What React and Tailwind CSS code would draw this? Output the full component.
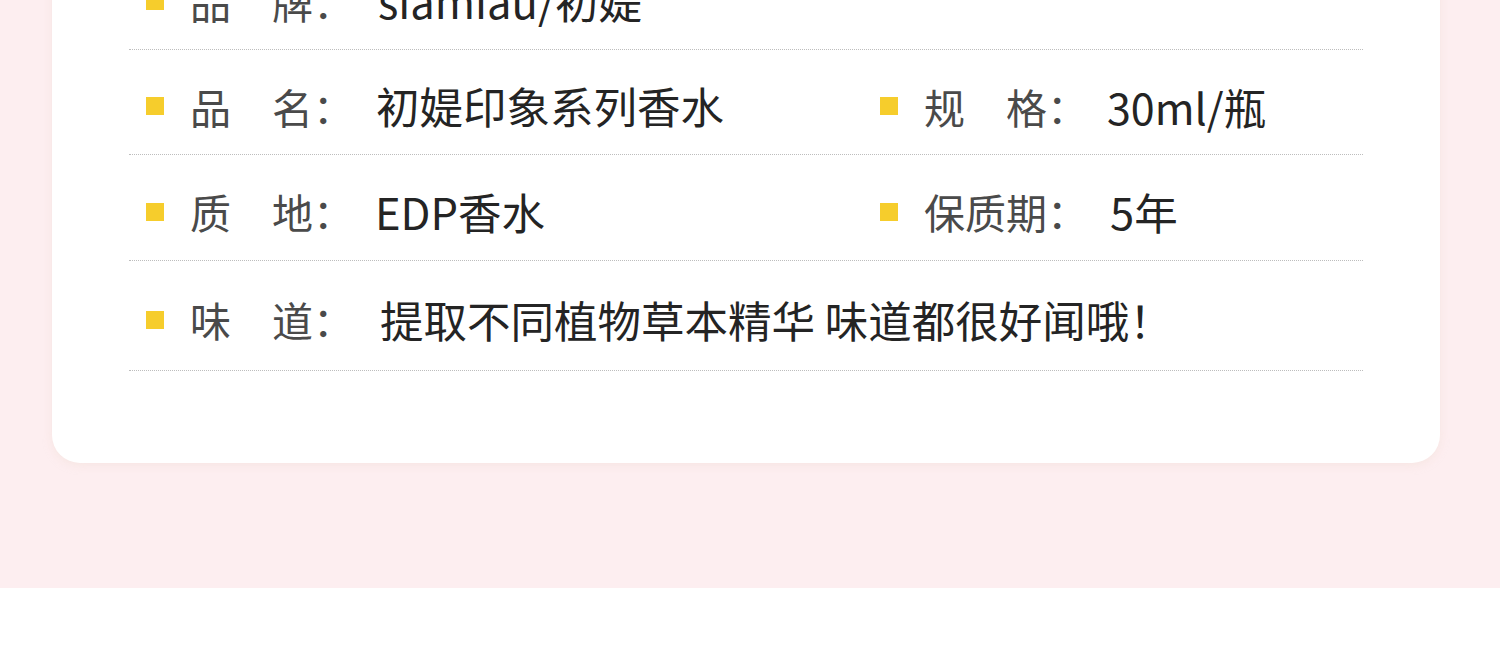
import React from "react";

const font = { fontFamily: '"Noto Sans CJK SC", "Noto Sans", sans-serif' };

function Item({ label, value, valueClass = "" }) {
  return (
    <div className="flex items-center">
      <span className="w-[18px] h-[18px] bg-[#f6cd2c] shrink-0" />
      <span className="ml-[26px] w-[186px] shrink-0 text-[41px] text-[#4a4a4a] whitespace-pre">{label}</span>
      <span className={"text-[43.5px] text-[#242424] whitespace-pre " + valueClass}>{value}</span>
    </div>
  );
}

function Row({ h, left, right }) {
  return (
    <div
      className={"flex items-center pl-[17px] pt-[8px] border-b border-dotted border-[#bdbdbd] " + h}
    >
      <div className="w-[734px] shrink-0">{left}</div>
      {right && <div>{right}</div>}
    </div>
  );
}

export default function App() {
  return (
    <div className="w-[1500px] h-[661px] overflow-hidden bg-white" style={font}>
      <div className="h-[588px] flex flex-col bg-[#fdeef0] pl-[52px] pr-[60px]">
        <div className="mt-[-80px] bg-white rounded-[28px] pt-[25px] pb-[92px] px-[77px] shadow-[0_2px_10px_rgba(235,215,200,0.35)] leading-none">
          <Row h="h-[105px]" left={<Item label={"品　牌："} value="siamiau/初媞" valueClass="ml-[2px] text-[42.5px]" />} />
          <Row
            h="h-[105px]"
            left={<Item label={"品　名："} value="初媞印象系列香水" />}
            right={<Item label={"规　格："} value="30ml/瓶" valueClass="ml-[-3px] text-[43px]" />}
          />
          <Row
            h="h-[106px]"
            left={<Item label={"质　地："} value="EDP香水" valueClass="ml-[-1px]" />}
            right={<Item label={"保质期："} value="5年" />}
          />
          <Row
            h="h-[110px]"
            left={<Item label={"味　道："} value="提取不同植物草本精华 味道都很好闻哦！" valueClass="ml-[4px]" />}
          />
        </div>
      </div>
    </div>
  );
}
